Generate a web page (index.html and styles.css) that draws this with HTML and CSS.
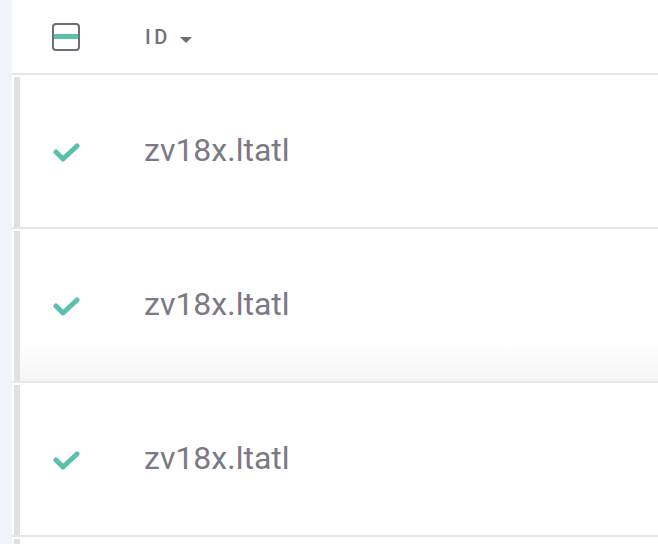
FILE: index.html
```html
<!DOCTYPE html>
<html>
<head>
    <title>Records</title>
    <link rel="stylesheet" href="styles.css">
</head>
<body>
    <div class="rail"></div>
    <div class="table">
        <div class="head">
            <div class="head-check">
                <span class="box"><span class="dash"></span></span>
            </div>
            <div class="head-id">ID <span class="caret"></span></div>
        </div>

        <div class="row">
            <div class="row-inner">
                <div class="check">
                    <svg width="28" height="21" viewBox="0 0 28 21"><polyline points="4,10 11,17 25,4" fill="none" stroke="#5bbfae" stroke-width="5" stroke-linecap="round" stroke-linejoin="round"/></svg>
                </div>
                <div class="cell-id">zv18x.ltatl</div>
            </div>
        </div>
        <div class="row hover">
            <div class="row-inner">
                <div class="check">
                    <svg width="28" height="21" viewBox="0 0 28 21"><polyline points="4,10 11,17 25,4" fill="none" stroke="#5bbfae" stroke-width="5" stroke-linecap="round" stroke-linejoin="round"/></svg>
                </div>
                <div class="cell-id">zv18x.ltatl</div>
            </div>
        </div>
        <div class="row">
            <div class="row-inner">
                <div class="check">
                    <svg width="28" height="21" viewBox="0 0 28 21"><polyline points="4,10 11,17 25,4" fill="none" stroke="#5bbfae" stroke-width="5" stroke-linecap="round" stroke-linejoin="round"/></svg>
                </div>
                <div class="cell-id">zv18x.ltatl</div>
            </div>
        </div>
        <div class="row">
            <div class="row-inner">
                <div class="check"></div>
                <div class="cell-id"></div>
            </div>
        </div>
    </div>
</body>
</html>
```

FILE: styles.css
```css
html, body {
    margin: 0;
    padding: 0;
    height: 100%;
    overflow: hidden;
}
body {
    display: flex;
    font-family: Roboto, "Liberation Sans", sans-serif;
    background-color: #fff;
}
.rail {
    width: 12px;
    flex: none;
    background-color: #f2f3f8;
}
.table {
    flex: 1;
    background-color: #fff;
}
.head {
    display: grid;
    grid-template-columns: 132px 1fr;
    align-items: center;
    height: 73px;
    border-bottom: 2px solid #e6e6e6;
}
.head-check {
    padding-left: 40px;
    display: flex;
}
.box {
    display: flex;
    align-items: center;
    width: 24px;
    height: 24px;
    border: 2px solid #6e6d7a;
    border-radius: 4px;
}
.dash {
    display: block;
    width: 100%;
    height: 5px;
    background-color: #5bbfae;
}
.head-id {
    display: flex;
    align-items: center;
    font-size: 20px;
    font-weight: 500;
    letter-spacing: 3.5px;
    color: #72717e;
    padding-left: 1px;
}
.caret {
    display: inline-block;
    margin-left: 9px;
    margin-top: 6px;
    border-left: 6px solid transparent;
    border-right: 6px solid transparent;
    border-top: 6px solid #6e6d7a;
}
.row {
    padding: 2px 0 0 2px;
    border-bottom: 2px solid #e6e6e6;
}
.row-inner {
    display: grid;
    grid-template-columns: 124px 1fr;
    align-items: center;
    height: 150px;
    border-left: 6px solid #e0e0e0;
}
.hover .row-inner {
    background: linear-gradient(to bottom, #fff 0, #fff 74%, #f5f5f5 100%);
}
.check {
    padding-left: 32px;
    display: flex;
}
.cell-id {
    font-size: 32px;
    color: #7a7986;
    padding-bottom: 4px;
}
```
